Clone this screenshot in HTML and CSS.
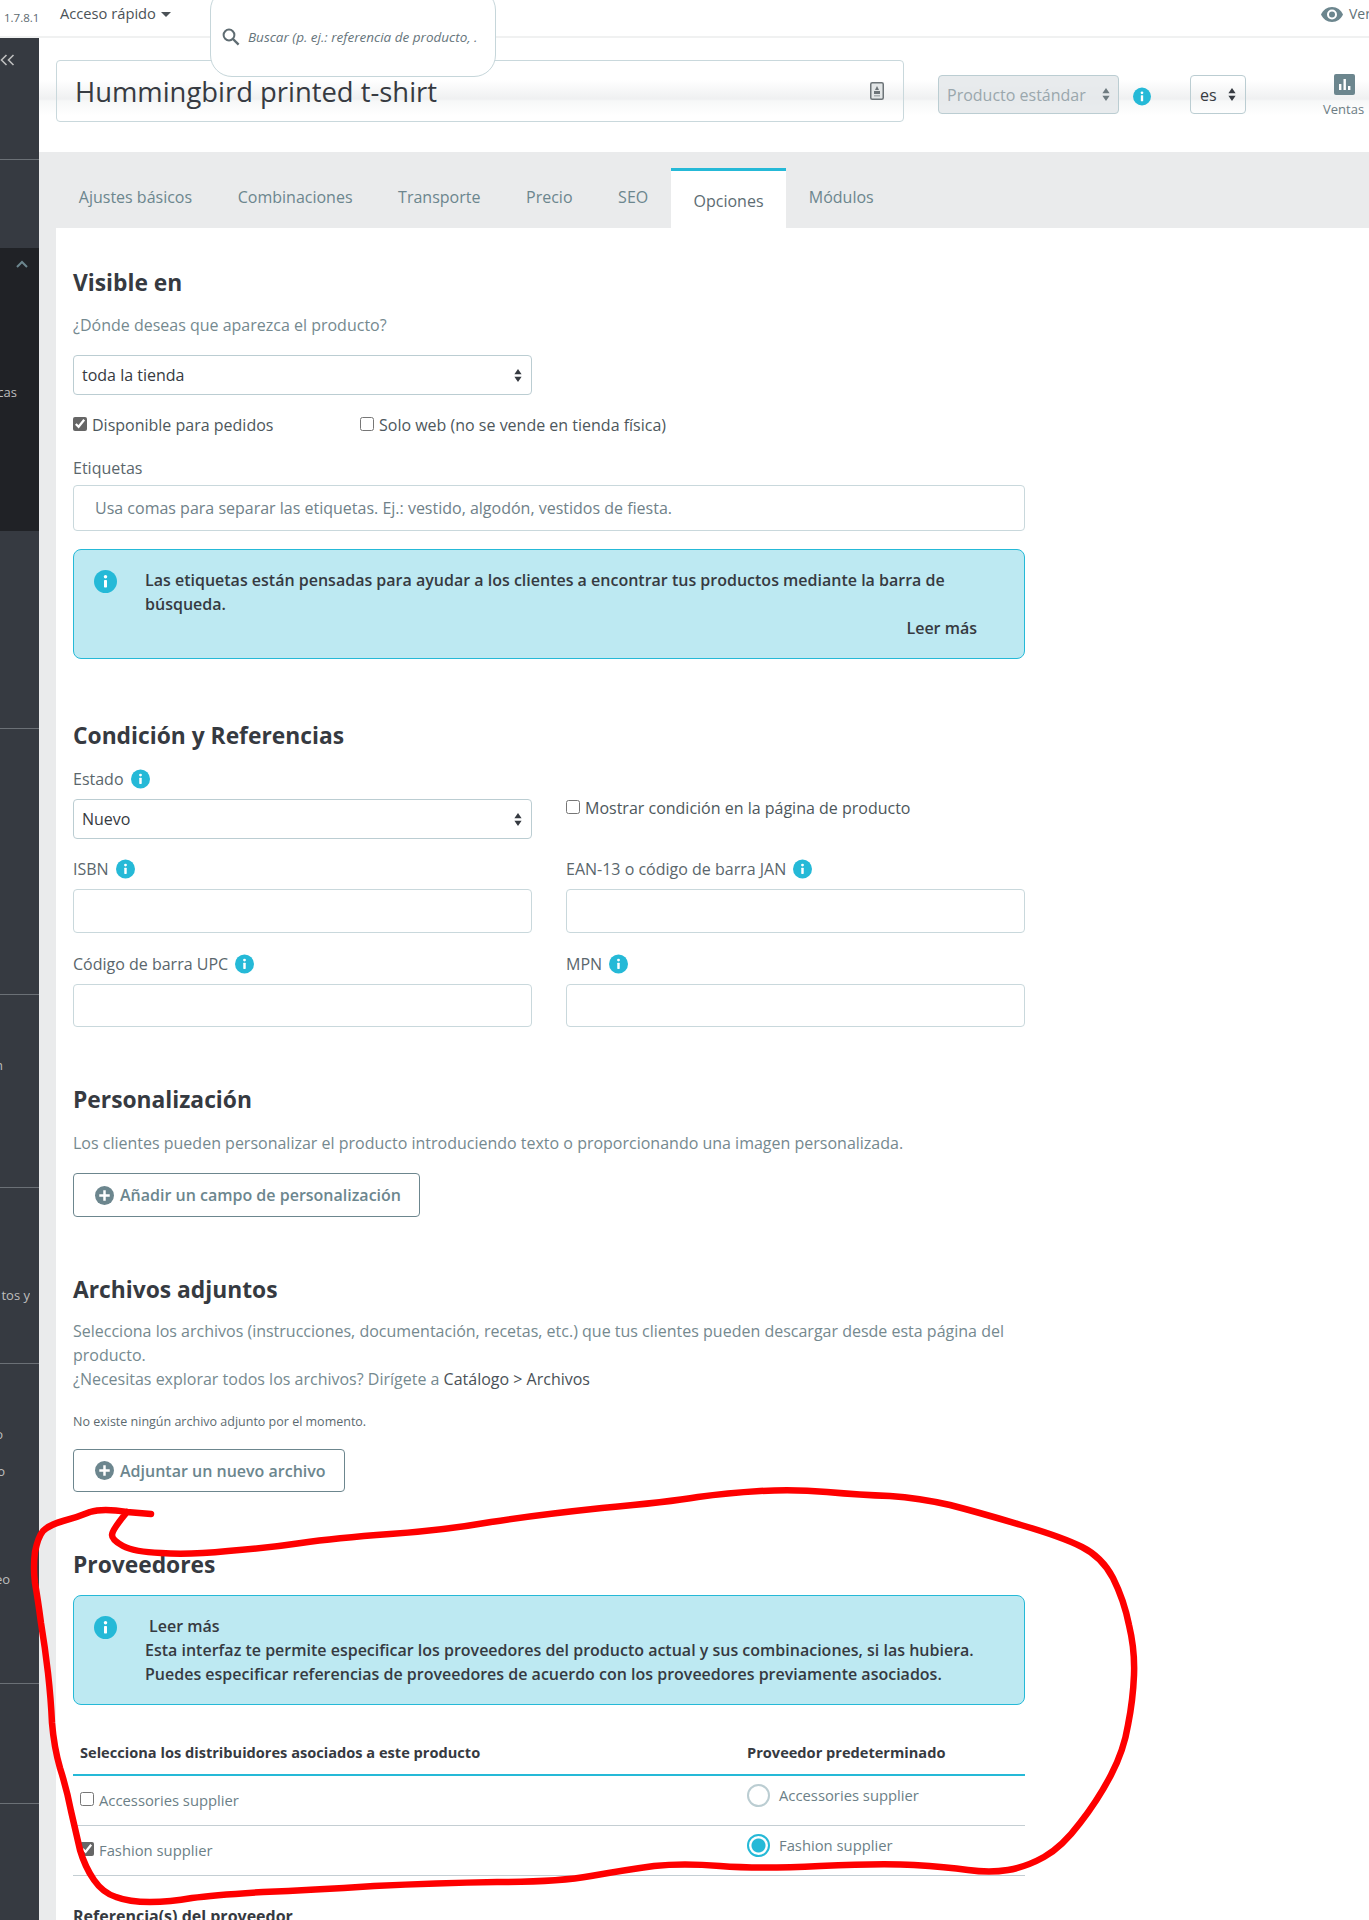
FILE: index.html
```html
<!DOCTYPE html>
<html lang="es">
<head>
<meta charset="utf-8">
<title>Hummingbird printed t-shirt</title>
<link rel="stylesheet" href="styles.css">
</head>
<body>
<svg class="defs" width="0" height="0">
  <symbol id="info" viewBox="0 0 20 20"><circle cx="10" cy="10" r="10" fill="#25b9d7"/><rect x="8.7" y="8.6" width="2.6" height="6.6" rx=".6" fill="#fff"/><circle cx="10" cy="5.9" r="1.5" fill="#fff"/></symbol>
  <symbol id="updown" viewBox="0 0 10 16"><path d="M5 0 9.5 6.5H.5zM5 16 .5 9.5h9z" fill="currentColor"/></symbol>
  <symbol id="plus" viewBox="0 0 20 20"><circle cx="10" cy="10" r="10" fill="#6c868e"/><path d="M8.7 4.5h2.6v4.2h4.2v2.6h-4.2v4.2H8.7v-4.2H4.5V8.7h4.2z" fill="#fff"/></symbol>
</svg>

<header class="topbar">
  <span class="version">1.7.8.1</span>
  <span class="quick">Acceso rápido<i class="caret"></i></span>
  <div class="search">
    <svg class="search-icon" viewBox="0 0 18 18"><circle cx="7" cy="7" r="5.4" fill="none" stroke="#5f6c72" stroke-width="2"/><path d="m11 11 5.6 5.6" stroke="#5f6c72" stroke-width="2.4" fill="none"/></svg>
    <span class="search-text">Buscar (p. ej.: referencia de producto, .</span>
  </div>
  <span class="view-shop">
    <svg class="eye" viewBox="0 0 22 15"><path d="M11 0C6 0 2 3 0 7.500 2 12 6 15 11 15s9-3 11-7.500C20 3 16 0 11 0z" fill="#6c868e"/><circle cx="11" cy="7.500" r="5" fill="#fff"/><circle cx="11" cy="7.500" r="3" fill="#6c868e"/></svg>
    <span class="view-text">Ver mi tienda</span>
  </span>
</header>

<div class="layout">
  <aside class="sidebar">
    <div class="sb sb1"><svg class="collapse" viewBox="0 0 15 12"><path d="M6.500 1 1.500 6l5 5M13.500 1l-5 5 5 5" fill="none" stroke="#bebebe" stroke-width="1.600"/></svg></div>
    <div class="sb sb2"></div>
    <div class="sb sb3">
      <svg class="chev" viewBox="0 0 12 8"><path d="M1 7 6 2l5 5" fill="none" stroke="#6c868e" stroke-width="2"/></svg>
      <span class="frag frag-cas">Estadísticas</span>
    </div>
    <div class="sb sb4"></div>
    <div class="sb sb5"></div>
    <div class="sb sb6"><span class="frag frag-n">n</span></div>
    <div class="sb sb7"><span class="frag frag-tos">tos y</span></div>
    <div class="sb sb8">
      <span class="frag frag-o1">o</span>
      <span class="frag frag-o2">o</span>
      <span class="frag frag-eo">eo</span>
    </div>
    <div class="sb sb9"></div>
  </aside>

  <main class="main">
    <section class="head">
      <div class="title-box">
        <span class="title">Hummingbird printed t-shirt</span>
        <svg class="title-icon" viewBox="0 0 14 18"><rect x=".75" y=".75" width="12.500" height="16.500" rx="1.500" fill="#e3e6e7" stroke="#6d7478" stroke-width="1.500"/><path d="M7 4 9 8H5z" fill="#6d7478"/><rect x="4" y="9" width="6" height="3" fill="#6d7478"/><rect x="4" y="13" width="6" height="1.500" fill="#a9afb2"/></svg>
      </div>
      <div class="select type-select"><span>Producto estándar</span><svg class="arrows"><use href="#updown"/></svg></div>
      <svg class="info info-head"><use href="#info"/></svg>
      <div class="select lang-select"><span>es</span><svg class="arrows"><use href="#updown"/></svg></div>
      <div class="sales">
        <svg class="sales-icon" viewBox="0 0 21 21"><rect width="21" height="21" rx="2" fill="#6c868e"/><path d="M5 10h2.400v6H5zM9.500 5h2.400v11H9.500zM14 12h2.400v4H14z" fill="#fff"/></svg>
        <span>Ventas</span>
      </div>
    </section>

    <nav class="tabs">
      <span class="tab">Ajustes básicos</span>
      <span class="tab">Combinaciones</span>
      <span class="tab">Transporte</span>
      <span class="tab">Precio</span>
      <span class="tab">SEO</span>
      <span class="tab tab-active">Opciones</span>
      <span class="tab">Módulos</span>
    </nav>

    <div class="work">
      <div class="panel">
        <div class="form">
          <h2>Visible en</h2>
          <p class="muted m15">¿Dónde deseas que aparezca el producto?</p>
          <div class="select field-select m18"><span>toda la tienda</span><svg class="arrows"><use href="#updown"/></svg></div>
          <div class="checks m18">
            <label class="check check-a"><input type="checkbox" checked>Disponible para pedidos</label>
            <label class="check"><input type="checkbox">Solo web (no se vende en tienda física)</label>
          </div>
          <div class="label m19">Etiquetas</div>
          <input class="input input-tags" type="text" placeholder="Usa comas para separar las etiquetas. Ej.: vestido, algodón, vestidos de fiesta.">
          <div class="alert m18">
            <svg class="info info-alert"><use href="#info"/></svg>
            <div class="alert-body">
              Las etiquetas están pensadas para ayudar a los clientes a encontrar tus productos mediante la barra de búsqueda.
              <div class="alert-more">Leer más</div>
            </div>
          </div>

          <h2 class="h-next62">Condición y Referencias</h2>
          <div class="two two-state">
            <div>
              <div class="label">Estado <svg class="info info-label"><use href="#info"/></svg></div>
              <div class="select field-select m8"><span>Nuevo</span><svg class="arrows"><use href="#updown"/></svg></div>
            </div>
            <label class="check check-cond"><input type="checkbox">Mostrar condición en la página de producto</label>
          </div>
          <div class="two m18">
            <div>
              <div class="label">ISBN <svg class="info info-label"><use href="#info"/></svg></div>
              <input class="input input-h44 m8" type="text">
            </div>
            <div>
              <div class="label">EAN-13 o código de barra JAN <svg class="info info-label"><use href="#info"/></svg></div>
              <input class="input input-h44 m8" type="text">
            </div>
          </div>
          <div class="two m19">
            <div>
              <div class="label">Código de barra UPC <svg class="info info-label"><use href="#info"/></svg></div>
              <input class="input input-h43 m8" type="text">
            </div>
            <div>
              <div class="label">MPN <svg class="info info-label"><use href="#info"/></svg></div>
              <input class="input input-h43 m8" type="text">
            </div>
          </div>

          <h2 class="h-next58">Personalización</h2>
          <p class="muted m16">Los clientes pueden personalizar el producto introduciendo texto o proporcionando una imagen personalizada.</p>
          <button class="btn btn-h44 m18" type="button"><svg class="plus"><use href="#plus"/></svg>Añadir un campo de personalización</button>

          <h2 class="h-next58">Archivos adjuntos</h2>
          <p class="muted m14">Selecciona los archivos (instrucciones, documentación, recetas, etc.) que tus clientes pueden descargar desde esta página del producto.<br>¿Necesitas explorar todos los archivos? Dirígete a <span class="link">Catálogo &gt; Archivos</span></p>
          <p class="small">No existe ningún archivo adjunto por el momento.</p>
          <button class="btn btn-h43 m18" type="button"><svg class="plus"><use href="#plus"/></svg>Adjuntar un nuevo archivo</button>

          <h2 class="h-next58">Proveedores</h2>
          <div class="alert m15">
            <svg class="info info-alert"><use href="#info"/></svg>
            <div class="alert-body">
              <div class="alert-lead">Leer más</div>
              Esta interfaz te permite especificar los proveedores del producto actual y sus combinaciones, si las hubiera.<br>Puedes especificar referencias de proveedores de acuerdo con los proveedores previamente asociados.
            </div>
          </div>

          <div class="table">
            <div class="t-head">
              <div>Selecciona los distribuidores asociados a este producto</div>
              <div class="t-col2">Proveedor predeterminado</div>
            </div>
            <div class="t-row">
              <label class="t-check"><input type="checkbox">Accessories supplier</label>
              <div class="t-radio"><span class="radio"></span>Accessories supplier</div>
            </div>
            <div class="t-row">
              <label class="t-check"><input type="checkbox" checked>Fashion supplier</label>
              <div class="t-radio"><span class="radio radio-on"></span>Fashion supplier</div>
            </div>
          </div>
          <h3 class="refs">Referencia(s) del proveedor</h3>
        </div>
      </div>
    </div>
  </main>
</div>

<svg class="scribble" viewBox="0 0 1369 1920" width="1369" height="1920">
  <path d="M151 1514 L127 1512 Q103 1508 90 1512 Q78 1517 63 1521 Q49 1525 43 1531 Q38 1537 35 1552 Q33 1567 35 1583 Q38 1600 41 1623 Q45 1647 48 1673 Q51 1700 52 1723 Q54 1747 60 1768 Q67 1790 71 1811 Q76 1833 80 1850 Q85 1867 94 1880 Q103 1893 116 1897 Q129 1902 150 1902 Q170 1902 192 1898 Q214 1895 263 1892 Q312 1890 374 1886 Q437 1883 497 1882 Q558 1882 591 1876 Q625 1870 654 1866 Q683 1863 720 1866 Q758 1869 820 1866 Q883 1863 914 1865 Q946 1867 968 1870 Q990 1873 1008 1870 Q1026 1867 1044 1857 Q1062 1847 1080 1823 Q1098 1800 1111 1775 Q1124 1750 1128 1725 Q1133 1700 1134 1675 Q1135 1650 1129 1625 Q1124 1600 1113 1578 Q1102 1557 1082 1547 Q1062 1537 1021 1525 Q981 1513 950 1505 Q919 1498 890 1496 Q861 1495 827 1492 Q794 1489 760 1491 Q727 1493 698 1497 Q669 1502 602 1508 Q536 1515 491 1522 Q446 1530 390 1534 Q335 1538 301 1543 Q268 1548 228 1551 Q188 1555 161 1553 Q134 1552 123 1546 Q112 1540 112 1535 Q112 1530 127 1512" fill="none" stroke="#fe0000" stroke-width="6.500" stroke-linecap="round" stroke-linejoin="round"/>
</svg>
</body>
</html>
```
FILE: styles.css
```css
* { box-sizing: border-box; }
html, body { margin: 0; padding: 0; }
body {
  position: relative;
  width: 1369px;
  height: 1920px;
  overflow: hidden;
  background: #fff;
  color: #363a41;
  font-family: "Open Sans", "Noto Sans", sans-serif;
  font-size: 16px;
  line-height: 24px;
}
.defs { position: absolute; }

/* top bar */
.topbar {
  position: relative;
  z-index: 3;
  height: 38px;
  display: flex;
  align-items: flex-start;
  border-bottom: 2px solid #f0f1f1;
  background: #fff;
}
.version { margin: 6px 0 0 4px; width: 56px; font-size: 11.500px; color: #5c686e; }
.quick { margin-top: 1px; font-size: 14.700px; color: #4b5257; display: flex; align-items: center; }
.caret { margin: 2px 0 0 5px; border: 5px solid transparent; border-top-color: #4b5257; border-bottom: 0; }
.search {
  position: absolute;
  left: 210px;
  top: -12px;
  width: 286px;
  height: 89px;
  padding: 9px 0 0 11px;
  display: flex;
  align-items: center;
  background: #fff;
  border: 1px solid #c6d6da;
  border-radius: 22px;
  overflow: hidden;
}
.search-icon { width: 18px; height: 18px; margin-right: 8px; flex: none; }
.search-text { font-size: 13.500px; font-style: italic; color: #66757c; white-space: nowrap; width: 230px; overflow: hidden; }
.view-shop { margin: 0 0 0 auto; padding-top: 2px; width: 48px; display: flex; align-items: center; overflow: hidden; white-space: nowrap; font-size: 14px; color: #5f7177; }
.eye { width: 22px; height: 15px; margin-right: 6px; flex: none; }
.view-text { flex: none; }

/* layout */
.layout { display: flex; height: 1882px; }

/* sidebar */
.sidebar { width: 39px; flex: none; background: #363a41; color: #bebebe; font-size: 13px; overflow: hidden; }
.sb { position: relative; border-bottom: 1px solid #6b7076; overflow: hidden; }
.sb1 { height: 122px; }
.sb2 { height: 88px; border-bottom: 0; }
.sb3 { height: 283px; background: #202226; border-bottom: 0; }
.sb4 { height: 198px; }
.sb5 { height: 266px; }
.sb6 { height: 193px; }
.sb7 { height: 176px; }
.sb8 { height: 320px; }
.sb9 { height: 120px; }
.collapse { display: block; width: 15px; height: 12px; margin: 16px 0 0 0; }
.chev { display: block; width: 12px; height: 8px; margin: 12px 0 0 16px; }
.frag { display: flex; justify-content: flex-end; line-height: 18px; white-space: nowrap; overflow: hidden; }
.frag-cas { width: 17px; margin-top: 115px; }
.frag-n { width: 3px; margin-top: 61px; }
.frag-tos { width: 30px; margin-top: 98px; }
.frag-o1 { width: 3px; margin-top: 61px; }
.frag-o2 { width: 5px; margin-top: 19px; }
.frag-eo { width: 10px; margin-top: 90px; }

/* main */
.main { flex: 1; min-width: 0; display: flex; flex-direction: column; }
.head {
  height: 114px;
  flex: none;
  display: flex;
  align-items: flex-start;
  padding: 22px 0 0 17px;
  background: linear-gradient(to bottom, #fff 42px, #eff0f1 61px, #f7f8f8 63px, #fff 78px);
}
.title-box {
  width: 848px;
  height: 62px;
  flex: none;
  display: flex;
  align-items: center;
  justify-content: space-between;
  padding: 1px 19px 0 18px;
  border: 1px solid #c9d8dc;
  border-radius: 4px;
}
.title { font-size: 27.400px; line-height: 36px; color: #363a41; }
.title-icon { width: 14px; height: 18px; margin-top: -1px; }
.select {
  display: flex;
  align-items: center;
  justify-content: space-between;
  height: 40px;
  flex: none;
  border: 1px solid #bbcdd2;
  border-radius: 4px;
  font-size: 16px;
  color: #363a41;
}
.arrows { width: 8px; height: 13px; flex: none; color: #363a41; }
.type-select {
  width: 181px;
  height: 39px;
  margin: 15px 0 0 34px;
  padding: 0 8px 0 8px;
  background: rgba(228, 232, 234, .85);
  color: #9aa7ad;
}
.type-select .arrows { color: #6e7b80; }
.info { display: block; flex: none; }
.info-head { width: 18px; height: 19px; margin: 27px 0 0 14px; }
.lang-select { width: 56px; height: 39px; margin: 15px 0 0 39px; padding: 0 9px 0 9px; }
.sales { width: 50px; flex: none; margin: 14px 0 0 77px; display: flex; flex-direction: column; align-items: flex-start; font-size: 13px; color: #6c7c83; line-height: 18px; }
.sales-icon { width: 21px; height: 21px; margin: 0 0 5px 11px; }

/* tabs */
.tabs {
  height: 76px;
  flex: none;
  display: flex;
  align-items: flex-start;
  padding: 16px 0 0 17px;
  background: #eaebec;
  font-size: 16px;
  color: #6c868e;
}
.tab { height: 60px; padding: 17px 22.800px 0; white-space: nowrap; }
.tab-active { padding: 18px 22.500px 0; background: #fff; color: #5d6c73; border-top: 3px solid #25b9d7; }

/* form panel */
.work { flex: 1; background: #eaebec; padding-left: 17px; min-height: 0; }
.panel { height: 100%; background: #fff; padding: 40px 0 0 17px; }
.form { width: 952px; }
h2 { margin: 0; font-size: 22.800px; line-height: 30px; font-weight: 700; color: #363a41; }
.h-next62 { margin-top: 62px; }
.h-next58 { margin-top: 58px; }
p { margin: 0; }
.muted { color: #75898f; }
.link { color: #4a5157; }
.small { margin-top: 22px; font-size: 12.500px; line-height: 18px; color: #5c6a70; }
.m8 { margin-top: 8px; }
.m14 { margin-top: 14px; }
.m15 { margin-top: 15px; }
.m16 { margin-top: 16px; }
.m18 { margin-top: 18px; }
.m19 { margin-top: 19px; }
.field-select { width: 459px; padding: 0 9px 0 8px; }
.checks { display: flex; }
.check { display: flex; align-items: center; color: #4d575c; white-space: nowrap; }
.check input, .t-check input { width: 14px; height: 14px; margin: -3px 5px 0 0; accent-color: #666; }
.check-a { width: 287px; }
.label { font-size: 16px; line-height: 24px; color: #5a666c; display: flex; align-items: center; white-space: pre; }
.input {
  display: block;
  width: 100%;
  border: 1px solid #c9d8dc;
  border-radius: 4px;
  background: #fff;
  font: inherit;
  color: #363a41;
}
.input::placeholder { color: #6f8189; opacity: 1; }
.input-tags { height: 46px; margin-top: 5px; padding: 0 21px; }
.input-h44 { height: 44px; }
.input-h43 { height: 43px; }
.alert {
  height: 110px;
  display: flex;
  padding: 20px 0 0 20px;
  background: #bde9f2;
  border: 1px solid #25b9d7;
  border-radius: 8px;
  color: #363a41;
  font-weight: 600;
}
.info-alert { width: 23px; height: 23px; margin-right: 28px; }
.alert-body { width: 848px; margin-top: -2px; padding-right: 8px; }
.alert-more { text-align: right; padding-right: 8px; }
.alert-lead { padding-left: 4px; }
.two { display: grid; grid-template-columns: 459px 459px; column-gap: 34px; }
.two-state { margin-top: 16px; }
.check-cond { align-self: start; margin-top: 29px; }
.info-label { width: 19px; height: 20px; margin-left: 3px; }
.btn {
  display: flex;
  align-items: center;
  padding: 0 18px 0 21px;
  background: #fff;
  border: 1px solid #6c868e;
  border-radius: 4px;
  color: #6c868e;
  font-family: inherit;
  font-size: 16px;
  font-weight: 600;
}
.btn-h44 { height: 44px; }
.btn-h43 { height: 43px; }
.plus { width: 19px; height: 19px; margin-right: 6px; flex: none; }

/* table */
.table { margin-top: 30px; }
.t-head {
  display: grid;
  grid-template-columns: 674px 1fr;
  padding: 5px 0 10px 7px;
  border-bottom: 2px solid #25b9d7;
  font-size: 14.600px;
  line-height: 24px;
  font-weight: 700;
  color: #363a41;
}
.t-col2 { margin-left: -7px; }
.t-row {
  display: grid;
  grid-template-columns: 674px 1fr;
  height: 50px;
  border-bottom: 1px solid #c4ced3;
  font-size: 14.800px;
  color: #6c7f87;
}
.t-check { display: flex; align-items: center; padding: 0 0 2px 7px; height: 50px; }
.t-radio { display: flex; align-items: flex-start; line-height: 22px; padding-top: 8px; }
.radio { width: 23px; height: 23px; margin-right: 9px; border: 2px solid #bbcdd2; border-radius: 50%; background: #fff; flex: none; }
.radio-on { border-color: #25b9d7; background: radial-gradient(circle, #25b9d7 0 6.500px, #fff 7.500px); }
.refs { margin: 28px 0 0; font-size: 16px; line-height: 24px; font-weight: 700; color: #363a41; }

/* marker annotation over the page */
.scribble { position: absolute; left: 0; top: 0; z-index: 5; pointer-events: none; }
```
